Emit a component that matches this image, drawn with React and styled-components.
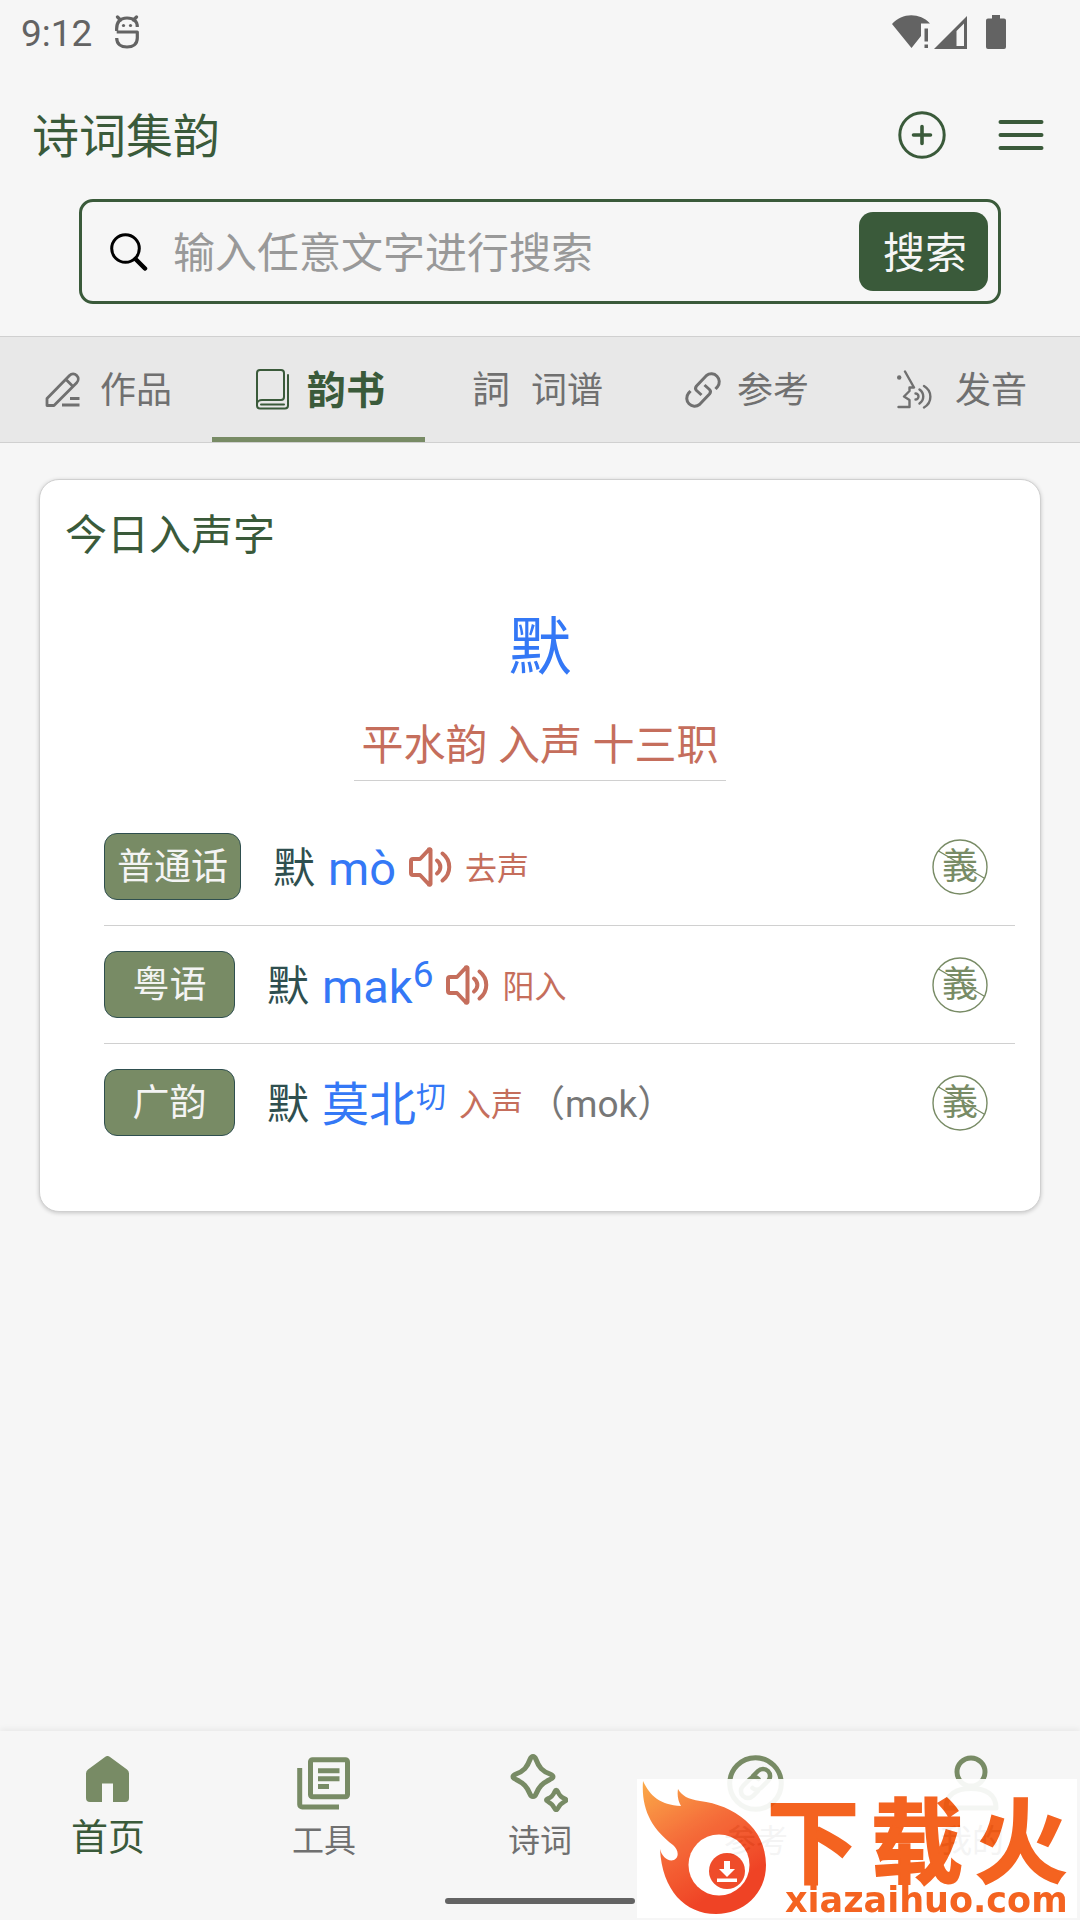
import React from "react";
import styled, { createGlobalStyle } from "styled-components";

const color = {
  page: "#f6f6f6",
  bar: "#e8e8e8",
  line: "#d0d0d0",
  deep: "#3a5a3a",
  olive: "#788b65",
  slate: "#2f4f4f",
  blue: "#3478f6",
  clay: "#c56e5c",
  grey: "#707070",
  status: "#636363",
};

const GlobalStyle = createGlobalStyle`
  * { box-sizing: border-box; }
  body {
    margin: 0;
    background: ${color.page};
    font-family: Roboto, "Noto Sans CJK SC", sans-serif;
  }
  button, input { font-family: inherit; }
`;

const Page = styled.div`
  min-height: 100vh;
  display: flex;
  flex-direction: column;
`;

const StatusBar = styled.div`
  display: flex;
  align-items: center;
  justify-content: space-between;
  height: 72px;
  padding: 0 74px 8px 21px;
  color: ${color.status};
`;

const StatusGroup = styled.div`
  display: flex;
  align-items: center;
  gap: ${(p) => p.$gap}px;
`;

const Clock = styled.time`
  padding-top: 3px;
  font-size: 37px;
  line-height: 40px;
`;

const Header = styled.header`
  display: flex;
  align-items: center;
  justify-content: space-between;
  height: 127px;
  padding: 0 36px 2px 32px;
`;

const AppTitle = styled.h1`
  margin: 0;
  padding-top: 4px;
  font-size: 47px;
  line-height: 60px;
  font-weight: 400;
  color: ${color.deep};
`;

const HeaderActions = styled.div`
  display: flex;
  align-items: center;
  gap: 52px;
`;

const IconButton = styled.button`
  display: flex;
  padding: 0;
  border: 0;
  background: none;
  color: ${color.deep};
  cursor: pointer;
`;

const SpeakerButton = styled(IconButton)`
  margin-bottom: 4px;
  color: ${color.clay};
`;

const SearchForm = styled.form`
  display: flex;
  align-items: center;
  height: 105px;
  margin: 0 79px 32px;
  padding: 0 10px 0 28px;
  border: 3px solid ${color.deep};
  border-radius: 14px;
`;

const SearchLabel = styled.label`
  display: flex;
`;

const SearchInput = styled.input`
  flex: 1;
  min-width: 0;
  height: 64px;
  padding: 4px 0 0 25px;
  border: 0;
  outline: 0;
  background: none;
  font-size: 42px;
  color: #222;
  &::placeholder { color: #999; opacity: 1; }
`;

const SearchButton = styled.button`
  height: 79px;
  padding: 4px 21px 0 24px;
  border: 0;
  border-radius: 14px;
  background: ${color.deep};
  color: ${color.page};
  font-size: 42px;
  line-height: 60px;
  cursor: pointer;
`;

const Tabs = styled.div`
  display: flex;
  height: 107px;
  border-top: 1px solid ${color.line};
  border-bottom: 1px solid ${color.line};
  background: ${color.bar};
`;

const Tab = styled.button`
  display: flex;
  align-items: center;
  gap: 15px;
  padding: 8px 40px 0 41px;
  border: 0;
  border-bottom: 5px solid ${(p) => (p.$active ? color.olive : "transparent")};
  background: none;
  color: ${(p) => (p.$active ? color.deep : color.grey)};
  font-size: ${(p) => (p.$active ? 39 : 36)}px;
  font-weight: ${(p) => (p.$active ? 700 : 400)};
  line-height: 60px;
  white-space: nowrap;
  cursor: pointer;
`;

const TabIcon = styled.span`
  display: flex;
  justify-content: center;
  width: ${(p) => p.$width}px;
  margin-bottom: 3px;
  font-size: 38px;
`;

const Card = styled.section`
  margin: 36px 39px 0;
  padding: 26px 25px 50px;
  border: 1px solid ${color.line};
  border-radius: 20px;
  background: #fff;
  box-shadow: 0 1px 4px rgba(0, 0, 0, 0.2);
`;

const CardTitle = styled.h2`
  margin: 0;
  font-size: 42px;
  line-height: 60px;
  font-weight: 400;
  color: ${color.deep};
`;

const Focus = styled.div`
  display: flex;
  flex-direction: column;
  align-items: center;
  margin-top: 42px;
`;

const FocusChar = styled.a`
  font-size: 63px;
  line-height: 80px;
  color: ${color.blue};
  text-decoration: none;
`;

const Rhyme = styled.div`
  margin-top: 34px;
  padding: 0 8px 10px;
  border-bottom: 1px solid ${color.line};
  font-size: 42px;
  line-height: 48px;
  color: ${color.clay};
`;

const Readings = styled.ul`
  margin: 27px 0 0 39px;
  padding: 0;
  list-style: none;
`;

const Reading = styled.li`
  display: flex;
  align-items: center;
  padding: 25px 27px 25px 0;
  border-bottom: 1px solid ${color.line};
  &:last-child { border-bottom: 0; }
`;

const Badge = styled.span`
  min-width: 131px;
  height: 67px;
  padding: 0 12px;
  border: 1px solid ${color.slate};
  border-radius: 13px;
  background: ${color.olive};
  color: #f4f4f4;
  font-size: 37px;
  line-height: 68px;
  text-align: center;
`;

const ReadingBody = styled.div`
  flex: 1;
  display: flex;
  align-items: center;
  gap: 13px;
  margin-left: 32px;
  padding-top: 4px;
  line-height: 56px;
`;

const Glyph = styled.span`
  font-size: 42px;
  color: ${color.slate};
`;

const Sound = styled.a`
  display: flex;
  font-size: 47px;
  color: ${color.blue};
  text-decoration: none;
`;

const Raised = styled.sup`
  align-self: flex-start;
  font-size: ${(p) => (p.$small ? 30 : 37)}px;
  line-height: ${(p) => (p.$small ? 40 : 32)}px;
`;

const Tone = styled.span`
  font-size: 32px;
  color: ${color.clay};
`;

const Note = styled.span`
  margin-left: -8px;
  font-size: 37px;
  color: #777;
`;

const MeaningButton = styled.button`
  display: grid;
  place-items: center;
  width: 56px;
  height: 56px;
  padding: 0;
  border: 0;
  background: none;
  color: ${color.olive};
  font-size: 36px;
  line-height: 56px;
  cursor: pointer;
  & > * { grid-area: 1 / 1; }
`;

const BottomBar = styled.footer`
  margin-top: auto;
  padding: 20px 0 16px;
  background: ${color.page};
  box-shadow: 0 -2px 6px rgba(0, 0, 0, 0.06);
`;

const Nav = styled.nav`
  display: flex;
`;

const NavItem = styled.a`
  flex: 1;
  display: flex;
  flex-direction: column;
  align-items: center;
  height: 147px;
  color: ${(p) => (p.$active ? color.deep : color.grey)};
  font-size: ${(p) => (p.$active ? 37 : 32)}px;
  line-height: 48px;
  text-decoration: none;
`;

const NavIcon = styled.span`
  display: flex;
  align-items: center;
  justify-content: center;
  height: ${(p) => (p.$active ? 56 : 64)}px;
  margin-bottom: ${(p) => (p.$active ? 8 : 2)}px;
  padding-right: 2px;
  color: ${color.olive};
`;

const HomeIndicator = styled.div`
  width: 190px;
  height: 6px;
  margin: 0 auto;
  border-radius: 3px;
  background: ${color.status};
`;

const Watermark = styled.div`
  position: fixed;
  right: 3px;
  bottom: 2px;
  display: flex;
  width: 440px;
  height: 139px;
  padding: 2px 0 0 5px;
  background: #fff;
  opacity: 0.92;
`;

const WatermarkText = styled.div`
  color: #f4560e;
  white-space: nowrap;
`;

const WatermarkName = styled.div`
  display: flex;
  gap: 12px;
  height: 106px;
  font: 700 92px / 110px "Noto Sans CJK SC", sans-serif;
  -webkit-text-stroke: 2px #f4560e;
`;

const WatermarkSite = styled.div`
  padding-left: 18px;
  font: 700 35px / 26px "DejaVu Sans", sans-serif;
`;

const Svg = ({ w, h, sw = 2, children, ...rest }) => (
  <svg
    width={w}
    height={h}
    viewBox={`0 0 ${w} ${h}`}
    fill="none"
    stroke="currentColor"
    strokeWidth={sw}
    strokeLinecap="round"
    strokeLinejoin="round"
    aria-hidden="true"
    {...rest}
  >
    {children}
  </svg>
);

const MascotIcon = () => (
  <Svg w={24} h={34} sw={3.2}>
    <path d="M1.700 16C1 7 5 3 12 3s10.300 3.500 10.300 9M1.700 17H22.300V23C22.300 29 18 32 12 32S1.700 29 1.700 23" strokeLinecap="butt" />
    <path d="M2.500 2l3 3M21.500 2l-3 3" />
    <circle cx="8.500" cy="10.500" r="1.600" fill="currentColor" stroke="none" />
    <circle cx="15.500" cy="10.500" r="1.600" fill="currentColor" stroke="none" />
  </Svg>
);

const WifiIcon = () => (
  <svg width="38" height="34" viewBox="0 0 38 34" fill="currentColor" aria-hidden="true">
    <path d="M0 9C10-2.500 28-2.500 38 8.500H29V21L19.500 33z" />
    <path d="M32.500 13.500h3.500v13h-3.500zM32.500 29.500h3.500v3.500h-3.500z" />
  </svg>
);

const SignalIcon = () => (
  <svg width="33" height="33" viewBox="0 0 33 33" fill="currentColor" aria-hidden="true">
    <path fillRule="evenodd" d="M33 0V33H0zM30 7.500L22.500 15V30H30z" />
  </svg>
);

const BatteryIcon = () => (
  <svg width="20" height="34" viewBox="0 0 20 34" fill="currentColor" aria-hidden="true">
    <path d="M6 0h8v3.500h4a2 2 0 0 1 2 2V32a2 2 0 0 1-2 2H2a2 2 0 0 1-2-2V5.500a2 2 0 0 1 2-2h4z" />
  </svg>
);

const PlusCircleIcon = () => (
  <Svg w={48} h={48} sw={3}>
    <circle cx="24" cy="24" r="22.200" />
    <path d="M24 15.500v17M15.500 24h17" strokeWidth="3.600" />
  </Svg>
);

const MenuIcon = () => (
  <Svg w={46} h={32} sw={4}>
    <path d="M2.500 3h41M2.500 16h41M2.500 29h41" />
  </Svg>
);

const SearchIcon = () => (
  <Svg w={38} h={38} sw={3}>
    <circle cx="15.500" cy="15.500" r="13.800" />
    <path d="M25.500 26L35 35.500" strokeWidth="4.500" />
  </Svg>
);

const PencilIcon = () => (
  <Svg w={36} h={36} sw={2.8} strokeLinecap="butt">
    <path d="M2 33.500V26.500L24.500 3.500a5 5 0 0 1 7.200 7.200L9 33.500zM21 7.500l7 7M25 26.500h9.500M17 33h17.500" />
  </Svg>
);

const BookIcon = () => (
  <Svg w={33} h={41} sw={2}>
    <path d="M1 36V4a3 3 0 0 1 3-3h21a3 3 0 0 1 3 3v24a3 3 0 0 1-3 3H6a5 4 0 0 0-5 4v1.500a3 3 0 0 0 3 3h25a3 3 0 0 0 3-3V6M5 35.500h23" />
  </Svg>
);

const LinkIcon = () => (
  <Svg w={36} h={36} sw={3} strokeLinecap="butt">
    <path d="M5.500 19L3.500 21.300A7.900 7.900 0 0 0 14.500 32.500L24.500 22Q26.500 19.500 24.500 17.500L19.500 13" />
    <path d="M30.500 17L32.500 14.700A7.900 7.900 0 0 0 21.500 3.500L11.500 14Q9.500 16.500 11.500 18.500L16.500 23" />
  </Svg>
);

const VoiceIcon = () => (
  <Svg w={36} h={40} sw={2.4}>
    <circle cx="2.200" cy="7.500" r="2.200" fill="currentColor" stroke="none" />
    <path d="M8 1.500L17 17.500H12.500V21L7 26.500L12.500 30V37H1.500M18.500 23.500a3 3 0 0 1 0 6M22.500 19.500c5 3.500 5 10.500 0 14M27 16c8.500 5 8.500 16.500 0 21.500" />
  </Svg>
);

const SpeakerIcon = () => (
  <Svg w={43} h={40} sw={4}>
    <path d="M2 14a2 2 0 0 1 2-2H11L19.500 3a1 1 0 0 1 2 .5V36.500a1 1 0 0 1-2 .5L11 28H4a2 2 0 0 1-2-2z" />
    <path d="M28 13.500c4.500 3.500 4.500 9.500 0 13M33.500 6.500c9 7 9 20 0 27" />
  </Svg>
);

const CrossedCircle = () => (
  <Svg w={56} h={56} sw={1.4}>
    <circle cx="28" cy="28" r="27" />
    <path d="M6.500 12L52 39" />
  </Svg>
);

const HomeIcon = () => (
  <svg width="43" height="46" viewBox="0 0 43 46" fill="currentColor" aria-hidden="true">
    <path d="M19 1a4 4 0 0 1 5 0L41 13.500a5 5 0 0 1 2 4V42a4 4 0 0 1-4 4H27V27.500H16V46H4a4 4 0 0 1-4-4V17.500a5 5 0 0 1 2-4z" />
  </svg>
);

const ToolsIcon = () => (
  <Svg w={53} h={53} sw={5} strokeLinecap="butt">
    <rect x="13.500" y="2.700" width="37" height="37" rx="2" />
    <path d="M2.700 11V47.500a2.500 2.500 0 0 0 2.500 2.500H42M21 13.700h21.500M21 21.700h21.500M21 29.500h11" />
  </Svg>
);

const star =
  "M23 2.500c1.500 0 2.200 1 3 3c3 8 6 11.500 14 14.500c4 1.600 4 3.900 0 5.500c-8 4-11 7-14 14.500c-1.300 3.300-4.700 3.300-6 0c-3-7.500-6-10.500-14-14.500c-4-1.600-4-3.900 0-5.500c8-3 11-6.500 14-14.500c.8-2 1.500-3 3-3z";

const SparklesIcon = () => (
  <Svg w={58} h={58} sw={5}>
    <path d={star} />
    <path d={star} strokeWidth="9" transform="translate(34.700 34.700) scale(.5)" />
  </Svg>
);

const LinkCircleIcon = () => (
  <Svg w={57} h={57} sw={5}>
    <circle cx="28.500" cy="28.500" r="25.800" />
    <path d="M26 21l5-5a7 7 0 0 1 10 10l-7 7a6 6 0 0 1-8.500 0M31 36l-5 5a7 7 0 0 1-10-10l7-7a6 6 0 0 1 8.500 0" strokeWidth="4.500" />
  </Svg>
);

const PersonIcon = () => (
  <Svg w={56} h={56} sw={5}>
    <circle cx="28" cy="17" r="14" />
    <path d="M3 53C3 39 14 33.500 28 33.500S53 39 53 53z" />
  </Svg>
);

const FlameLogo = () => (
  <svg width="125" height="135" viewBox="0 0 125 135" aria-hidden="true">
    <defs>
      <linearGradient id="flame" x1="0" y1="0" x2="0.5" y2="0.9">
        <stop offset="0" stopColor="#fba43a" />
        <stop offset="0.5" stopColor="#f5622a" />
        <stop offset="1" stopColor="#ee3413" />
      </linearGradient>
    </defs>
    <path
      fill="url(#flame)"
      d="M1 0C8 15 18 24 39 25C36 20 35 14 36 8C40 15 46 18 58 20C91 24 124 46 124 84C124 113 101 133 74 133C43 133 20 109 18 68C20 76 26 81 32 79C38 76 36 68 31 64C10 48-1 29 1 0z"
    />
    <circle cx="77" cy="84" r="30.500" fill="#fff" />
    <circle cx="85" cy="90" r="18" fill="#ee3d18" />
    <path fill="#fff" d="M82 80h6v8h5l-8 8-8-8h5zM75 97.500h20v3.500H75z" />
  </svg>
);

const tabs = [
  { label: "作品", icon: <PencilIcon />, width: 44 },
  { label: "韵书", icon: <BookIcon />, width: 39, active: true },
  { label: "词谱", icon: <span>詞</span>, width: 50 },
  { label: "参考", icon: <LinkIcon />, width: 38 },
  { label: "发音", icon: <VoiceIcon />, width: 50 },
];

const readings = [
  { name: "普通话", sound: "mò", audio: true, tone: "去声" },
  { name: "粤语", sound: "mak", raised: "6", audio: true, tone: "阳入" },
  { name: "广韵", sound: "莫北", raised: "切", small: true, tone: "入声", note: "（mok）" },
];

const navItems = [
  { label: "首页", icon: <HomeIcon />, active: true },
  { label: "工具", icon: <ToolsIcon /> },
  { label: "诗词", icon: <SparklesIcon /> },
  { label: "参考", icon: <LinkCircleIcon /> },
  { label: "我的", icon: <PersonIcon /> },
];

export default function App() {
  return (
    <Page lang="zh-CN">
      <GlobalStyle />
      <StatusBar>
        <StatusGroup $gap={23}>
          <Clock>9:12</Clock>
          <MascotIcon />
        </StatusGroup>
        <StatusGroup $gap={19}>
          <StatusGroup $gap={4}>
            <WifiIcon />
            <SignalIcon />
          </StatusGroup>
          <BatteryIcon />
        </StatusGroup>
      </StatusBar>

      <Header>
        <AppTitle>诗词集韵</AppTitle>
        <HeaderActions>
          <IconButton type="button" aria-label="添加">
            <PlusCircleIcon />
          </IconButton>
          <IconButton type="button" aria-label="菜单">
            <MenuIcon />
          </IconButton>
        </HeaderActions>
      </Header>

      <SearchForm role="search" onSubmit={(e) => e.preventDefault()}>
        <SearchLabel htmlFor="query" aria-label="搜索">
          <SearchIcon />
        </SearchLabel>
        <SearchInput id="query" type="text" placeholder="输入任意文字进行搜索" />
        <SearchButton type="submit">搜索</SearchButton>
      </SearchForm>

      <Tabs role="tablist">
        {tabs.map((t) => (
          <Tab key={t.label} type="button" role="tab" aria-selected={!!t.active} $active={t.active}>
            <TabIcon $width={t.width}>{t.icon}</TabIcon>
            {t.label}
          </Tab>
        ))}
      </Tabs>

      <main>
        <Card>
          <CardTitle>今日入声字</CardTitle>
          <Focus>
            <FocusChar href="#mo">默</FocusChar>
            <Rhyme>平水韵 入声 十三职</Rhyme>
          </Focus>
          <Readings>
            {readings.map((r) => (
              <Reading key={r.name}>
                <Badge>{r.name}</Badge>
                <ReadingBody>
                  <Glyph>默</Glyph>
                  <Sound href="#sound">
                    {r.sound}
                    {r.raised && <Raised $small={r.small}>{r.raised}</Raised>}
                  </Sound>
                  {r.audio && (
                    <SpeakerButton type="button" aria-label="播放">
                      <SpeakerIcon />
                    </SpeakerButton>
                  )}
                  <Tone>{r.tone}</Tone>
                  {r.note && <Note>{r.note}</Note>}
                </ReadingBody>
                <MeaningButton type="button">
                  <CrossedCircle />
                  <span>義</span>
                </MeaningButton>
              </Reading>
            ))}
          </Readings>
        </Card>
      </main>

      <BottomBar>
        <Nav>
          {navItems.map((n) => (
            <NavItem key={n.label} href="#nav" $active={n.active}>
              <NavIcon $active={n.active}>{n.icon}</NavIcon>
              {n.label}
            </NavItem>
          ))}
        </Nav>
        <HomeIndicator />
      </BottomBar>

      <Watermark>
        <FlameLogo />
        <WatermarkText>
          <WatermarkName>
            <span>下</span>
            <span>载</span>
            <span>火</span>
          </WatermarkName>
          <WatermarkSite>xiazaihuo.com</WatermarkSite>
        </WatermarkText>
      </Watermark>
    </Page>
  );
}
